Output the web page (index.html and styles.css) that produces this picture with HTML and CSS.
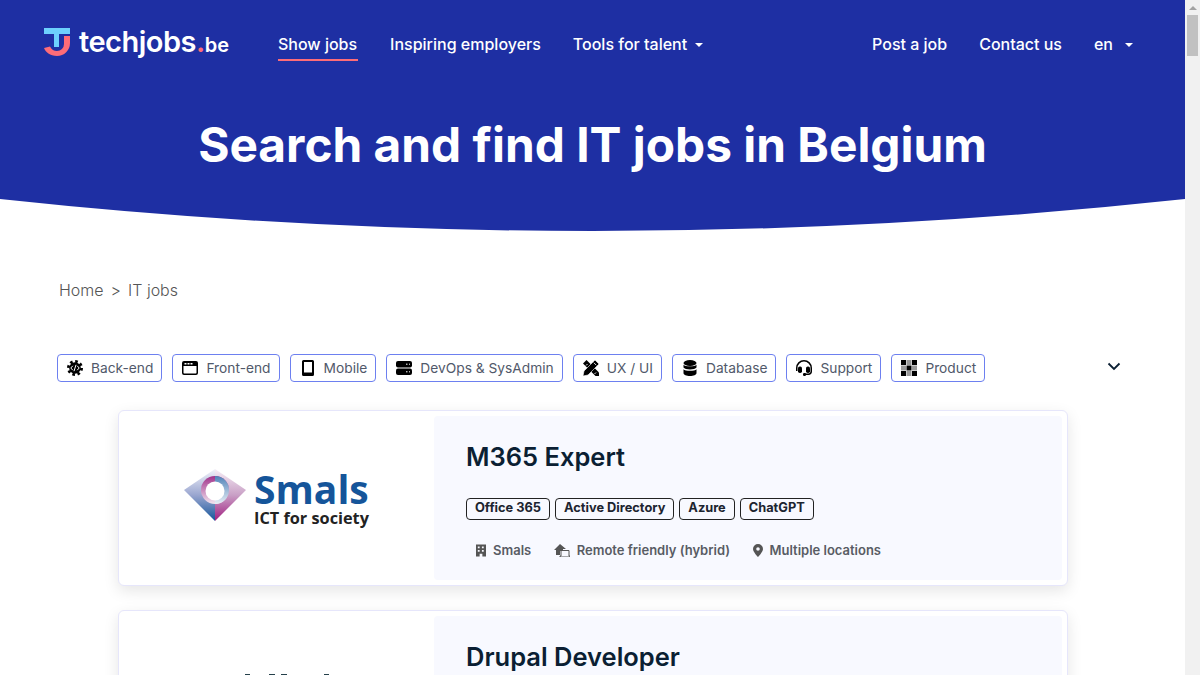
FILE: index.html
```html
<!DOCTYPE html>
<html lang="en">
<head>
  <meta charset="UTF-8" />
  <title>IT jobs in Belgium - techjobs.be</title>
  <link rel="stylesheet" href="styles.css">
</head>
<body>

<div class="page">
  <div class="hero">
    <nav class="topnav">
      <a class="logo" href="#">
        <svg width="26" height="28" viewBox="0 0 26 28">
          <path d="M20 8h6v7a13 13 0 0 1-13 13C6 28 1.500 24 0 20l6-1.500C7.500 21.500 10 23 13 23a7 7 0 0 0 7-7z" fill="#fd6c78"/>
          <path d="M0 0h26v6H15v13h-5V6H0z" fill="#6dd0fd"/>
        </svg>
        <span class="logo-text">techjobs<i>.</i><small>be</small></span>
      </a>
      <a class="nav-link active" href="#">Show jobs</a>
      <a class="nav-link" href="#">Inspiring employers</a>
      <a class="nav-link caret" href="#">Tools for talent</a>
      <div class="nav-right">
        <a class="nav-link" href="#">Post a job</a>
        <a class="nav-link" href="#">Contact us</a>
        <a class="nav-link caret lang" href="#">en</a>
      </div>
    </nav>
    <h1>Search and find IT jobs in Belgium</h1>
  </div>
  <svg class="curve" viewBox="0 0 1185 32" width="1185" height="32" preserveAspectRatio="none">
    <path d="M0 0H1185Q592.500 64 0 0Z" fill="#1e2fa3"/>
  </svg>

  <div class="crumbs"><a href="#">Home</a><span>&gt;</span><a href="#">IT jobs</a></div>

  <div class="filters">
    <a class="chip" href="#">
      <svg viewBox="0 0 16 16"><circle cx="8" cy="8" r="5.800"/><circle cx="8" cy="8" r="6.600" fill="none" stroke="#000" stroke-width="2.800" stroke-dasharray="2.600 2.580"/><path d="M5.800 5.800L3.800 8l2 2.200M10.200 5.800l2 2.200-2 2.200M9 4.800L7 11.200" fill="none" stroke="#fff" stroke-width="1"/></svg>
      Back-end</a>
    <a class="chip" href="#">
      <svg viewBox="0 0 16 16"><path fill-rule="evenodd" d="M2 1h12a2 2 0 0 1 2 2v10a2 2 0 0 1-2 2H2a2 2 0 0 1-2-2V3a2 2 0 0 1 2-2zM1.500 6v6.800a.7.700 0 0 0 .7.700h11.600a.7.700 0 0 0 .7-.7V6z"/><path d="M2.500 3h2v1.500h-2zM5.500 3h2v1.500h-2zM8.500 3h2v1.500h-2z" fill="#fff"/></svg>
      Front-end</a>
    <a class="chip" href="#">
      <svg viewBox="0 0 16 16"><path fill-rule="evenodd" d="M3.500 0h9A1.500 1.500 0 0 1 14 1.500v13a1.500 1.500 0 0 1-1.500 1.500h-9A1.500 1.500 0 0 1 2 14.500v-13A1.500 1.500 0 0 1 3.500 0zM4 2v10.500h8V2z"/></svg>
      Mobile</a>
    <a class="chip" href="#">
      <svg viewBox="0 0 16 16"><rect y="1" width="16" height="6.500" rx="2"/><rect y="8.500" width="16" height="6.500" rx="2"/><path d="M10 4.200h1.500M13 4.200h1M10 11.800h1.500M13 11.800h1" stroke="#fff" stroke-width="1"/></svg>
      DevOps &amp; SysAdmin</a>
    <a class="chip" href="#">
      <svg viewBox="0 0 16 16"><path d="M0 3.500L3.500 0 16 12.500V16h-3.500z"/><path d="M12 0l4 4L5 15l-5 1 1-5z" stroke="#fff" stroke-width=".6"/><path d="M3 5.500l1.500-1.500M11.500 14l1.500-1.500M10.800 2.700l2.500 2.500" stroke="#fff" stroke-width=".9"/></svg>
      UX / UI</a>
    <a class="chip" href="#">
      <svg viewBox="0 0 16 16"><ellipse cx="8" cy="3" rx="6.500" ry="3"/><path d="M1.500 4.800C3 6.800 13 6.800 14.500 4.800V7.500C13 10 3 10 1.500 7.500zM1.500 9.300C3 11.300 13 11.300 14.500 9.300V13c0 1.800-3 3-6.500 3s-6.500-1.200-6.500-3z"/></svg>
      Database</a>
    <a class="chip" href="#">
      <svg viewBox="0 0 16 16"><path d="M8 0a8 8 0 0 0-8 8v3h1.500V8a6.500 6.500 0 0 1 13 0v3.500c0 1.300-1 2-2 2H9v1.500h3.500c2 0 3.500-1.500 3.500-3.500V8a8 8 0 0 0-8-8z"/><rect x="2" y="6.500" width="4" height="6.500" rx="1.800"/><rect x="10" y="6.500" width="4" height="6.500" rx="1.800"/><rect x="7" y="13" width="3" height="3" rx="1.200"/></svg>
      Support</a>
    <a class="chip" href="#">
      <svg viewBox="0 0 16 16"><path d="M0 0h5v5H0zM11 0h5v5h-5zM5.500 5.500h5v5h-5zM0 11h5v5H0zM11 11h5v5h-5z"/><path d="M5.500 0h5v5h-5zM0 5.500h5v5H0zM11 5.500h5v5h-5zM5.500 11h5v5h-5z" opacity=".4"/></svg>
      Product</a>
    <svg class="chev" width="14" height="9" viewBox="0 0 14 9"><path d="M1.500 1.500L7 7l5.500-5.500" fill="none" stroke="#0b1f33" stroke-width="1.800"/></svg>
  </div>

  <div class="cards">
    <div class="card">
      <div class="card-logo">
        <svg class="diamond" width="62" height="52" viewBox="0 0 62 52">
          <defs>
            <linearGradient id="dl" x1="0" y1="0" x2="0" y2="1"><stop offset="0" stop-color="#f2f3fa"/><stop offset=".5" stop-color="#9aa6d0"/><stop offset="1" stop-color="#15559a"/></linearGradient>
            <linearGradient id="dr" x1="0" y1="0" x2="0" y2="1"><stop offset="0" stop-color="#f6eef6"/><stop offset=".5" stop-color="#c9a0c6"/><stop offset="1" stop-color="#a01e80"/></linearGradient>
            <linearGradient id="cl" x1="0" y1="0" x2="0" y2="1"><stop offset="0" stop-color="#a0308a"/><stop offset="1" stop-color="#f2e6f0"/></linearGradient>
            <linearGradient id="cr" x1="0" y1="0" x2="0" y2="1"><stop offset="0" stop-color="#4f82b8"/><stop offset="1" stop-color="#e8eff6"/></linearGradient>
          </defs>
          <path d="M31 0L0 21l31 31z" fill="url(#dl)"/>
          <path d="M31 0l31 21-31 31z" fill="url(#dr)"/>
          <circle cx="31" cy="21" r="14" fill="url(#cl)"/>
          <path d="M31 7a14 14 0 0 1 0 28z" fill="url(#cr)"/>
          <circle cx="31" cy="22" r="9.500" fill="#fff"/>
        </svg>
        <div class="smals">
          <span class="smals-name">Smals</span>
          <span class="smals-tag">ICT for society</span>
        </div>
      </div>
      <div class="card-body">
        <h2>M365 Expert</h2>
        <div class="tags">
          <span class="tag">Office 365</span>
          <span class="tag">Active Directory</span>
          <span class="tag">Azure</span>
          <span class="tag">ChatGPT</span>
        </div>
        <div class="meta">
          <span class="meta-item">
            <svg width="10" height="13" viewBox="0 0 11 13"><path fill-rule="evenodd" d="M0 0h11v13H7v-3H4v3H0zM2 2v2h2V2zM6.500 2v2h2V2zM2 6v2h2V6zM6.500 6v2h2V6z"/></svg>
            Smals</span>
          <span class="meta-item">
            <svg width="16" height="13" viewBox="0 0 16 13"><path d="M6 0l6 5H9v2H6v4H2V6H0z"/><path d="M7 6.500h8V12h1v1H6v-1h1z" fill="none" stroke="#555" stroke-width="1"/></svg>
            Remote friendly (hybrid)</span>
          <span class="meta-item">
            <svg width="10" height="13" viewBox="0 0 10 13"><path fill-rule="evenodd" d="M5 0a5 5 0 0 1 5 5c0 3-5 8-5 8S0 8 0 5a5 5 0 0 1 5-5zm0 3.200a1.800 1.800 0 1 0 0 3.600 1.800 1.800 0 0 0 0-3.600z"/></svg>
            Multiple locations</span>
        </div>
      </div>
    </div>

    <div class="card">
      <div class="card-logo second">
        <svg width="120" height="50" viewBox="0 0 120 50"><path d="M25 0h5v50h-5zM49 0h6v50h-6zM61 0h6v50h-6zM104 0h5v50h-5z" fill="#25404a"/></svg>
      </div>
      <div class="card-body">
        <h2>Drupal Developer</h2>
      </div>
    </div>
  </div>
</div>

<div class="scrollbar">
  <span class="arrow"></span>
  <span class="thumb"></span>
</div>

</body>
</html>
```

FILE: styles.css
```css
html, body {
  height: 100%;
}

body {
  margin: 0;
  display: flex;
  overflow: hidden;
  background: white;
  color: #0b1f33;
  font-family: "Inter", sans-serif;
}

a {
  color: inherit;
  text-decoration: none;
}

.page {
  flex: 1;
  min-width: 0;
  height: 100%;
  overflow: hidden;
}

/* hero + nav */
.hero {
  height: 199px;
  background: #1e2fa3;
  color: white;
  padding-top: 1px;
  box-sizing: border-box;
}

.topnav {
  display: flex;
  align-items: flex-start;
  padding: 27px 52px 0 44px;
}

.logo {
  display: flex;
  align-items: flex-start;
  gap: 9px;
  width: 234px;
}

.logo-text {
  font-weight: 600;
  font-size: 29px;
  line-height: 28px;
  letter-spacing: -.5px;
}

.logo-text i {
  color: #fd6c78;
  font-style: normal;
}

.logo-text small {
  font-size: 20px;
  letter-spacing: 0;
}

.nav-link {
  font-size: 16px;
  font-weight: 500;
  line-height: 20px;
  padding: 6px 0 5px;
  margin-right: 32px;
  border-bottom: 2px solid transparent;
}

.nav-link.active {
  padding-right: 1px;
  border-bottom-color: #fd6c78;
}

.caret::after {
  content: "";
  display: inline-block;
  margin-left: 8px;
  vertical-align: 3px;
  border-top: 4px solid white;
  border-left: 4px solid transparent;
  border-right: 4px solid transparent;
}

.lang::after {
  margin-left: 12px;
}

.nav-right {
  margin-left: auto;
  display: flex;
}

.nav-right .nav-link:last-child {
  margin-right: 0;
}

h1 {
  margin: 55px 0 0;
  text-align: center;
  font-size: 47.800px;
  line-height: 58px;
  font-weight: 700;
}

.curve {
  display: block;
}

/* breadcrumb */
.crumbs {
  display: flex;
  gap: 7px;
  margin: 28px 0 0 59px;
  font-size: 16px;
  line-height: 62px;
  font-weight: 300;
  color: #555;
}

/* filter chips */
.filters {
  display: flex;
  align-items: center;
  gap: 10px;
  margin: 33px 0 0 57px;
  padding-right: 64px;
}

.chip {
  display: flex;
  align-items: center;
  gap: 8px;
  height: 28px;
  box-sizing: border-box;
  padding: 0 8px 1px 9px;
  border: 1px solid #6d80f0;
  border-radius: 4px;
  font-size: 13.750px;
  color: #51596a;
  white-space: nowrap;
}

.chip svg {
  width: 16px;
  height: 16px;
}

.chev {
  margin-left: auto;
  margin-bottom: 4px;
}

/* job cards */
.cards {
  display: flex;
  flex-direction: column;
  gap: 24px;
  margin: 28px 117px 0 118px;
}

.card {
  display: flex;
  height: 176px;
  box-sizing: border-box;
  padding: 5px;
  border: 1px solid #e6e6fb;
  border-radius: 6px;
  background: white;
  box-shadow: 0 5px 15px rgba(0, 0, 0, 0.1);
}

.card-logo {
  width: 310px;
  flex-shrink: 0;
  display: flex;
  align-items: center;
  justify-content: center;
  gap: 8px;
  padding: 0 5px 6px 0;
  box-sizing: border-box;
}

.card-logo.second {
  align-items: flex-start;
  padding: 58px 0 0 2px;
}

.smals {
  display: flex;
  flex-direction: column;
  font-family: "Open Sans", sans-serif;
  margin-top: 8px;
}

.smals-name {
  font-size: 39px;
  line-height: 38px;
  font-weight: 700;
  color: #15559a;
}

.smals-tag {
  font-size: 16.300px;
  line-height: 20px;
  font-weight: 700;
  color: #222;
}

.card-body {
  flex: 1;
  background: #f8f9ff;
  border-radius: 4px;
  padding: 26px 32px 0;
}

h2 {
  margin: 0;
  font-size: 25.500px;
  line-height: 30px;
  font-weight: 600;
}

.tags {
  display: flex;
  gap: 5px;
  margin-top: 26px;
}

.tag {
  height: 22px;
  box-sizing: border-box;
  padding: 0 8px;
  border: 1px solid #222;
  border-radius: 4px;
  font-size: 12.800px;
  line-height: 18px;
  font-weight: 700;
  color: #1c2430;
}

.meta {
  display: flex;
  gap: 22.500px;
  margin-top: 20px;
  padding-left: 10px;
}

.meta-item {
  display: flex;
  align-items: center;
  gap: 7px;
  font-size: 13px;
  line-height: 20px;
  font-weight: 600;
  color: #585c64;
}

.meta-item svg {
  fill: #555;
}

/* fake browser scrollbar */
.scrollbar {
  width: 15px;
  height: 100%;
  flex-shrink: 0;
  background: #f1f1f1;
  display: flex;
  flex-direction: column;
  align-items: center;
}

.arrow {
  margin-top: 6px;
  border-bottom: 4px solid #a3a3a3;
  border-left: 4px solid transparent;
  border-right: 4px solid transparent;
}

.thumb {
  margin-top: 5px;
  width: 11px;
  height: 41px;
  background: #c1c1c1;
}
```
